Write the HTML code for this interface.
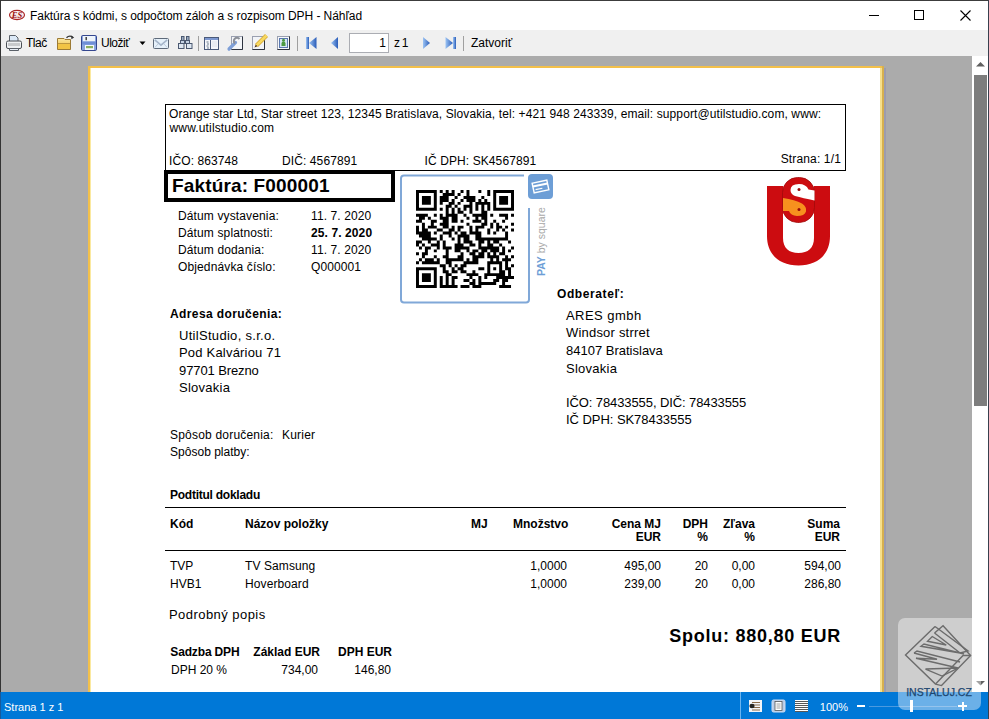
<!DOCTYPE html>
<html><head><meta charset="utf-8">
<style>
*{margin:0;padding:0;box-sizing:border-box}
html,body{width:989px;height:719px;overflow:hidden;background:#fff;font-family:"Liberation Sans",sans-serif;color:#000;position:relative}
.a{position:absolute;white-space:nowrap}
svg{position:absolute;overflow:visible}
</style></head><body>
<div class="a" style="left:0px;top:0px;width:989px;height:30px;background:#fff"></div>
<div class="a" style="left:0px;top:30px;width:989px;height:26px;background:#f0f0f0"></div>
<div class="a" style="left:0px;top:56px;width:972px;height:636px;background:#ababab"></div>
<div class="a" style="left:972px;top:56px;width:16px;height:636px;background:#fff"></div>
<div class="a" style="left:0px;top:692px;width:989px;height:27px;background:#0078d7"></div>
<div class="a" style="left:0px;top:0px;width:989px;height:1px;background:#3c3c3c"></div>
<div class="a" style="left:0px;top:0px;width:1px;height:692px;background:#333"></div>
<div class="a" style="left:0px;top:692px;width:1px;height:27px;background:#1a5a9a"></div>
<div class="a" style="left:988px;top:0px;width:1px;height:719px;background:#38404e"></div>
<svg style="left:8px;top:9px" width="18" height="13" viewBox="0 0 18 13"><defs><linearGradient id="eg" x1="0" y1="0" x2="0" y2="1"><stop offset="0" stop-color="#fff"/><stop offset="1" stop-color="#f0d0d0"/></linearGradient></defs><ellipse cx="9" cy="6" rx="7.5" ry="4.6" fill="url(#eg)" stroke="#a82424" stroke-width="1.1"/><text x="9" y="9" text-anchor="middle" font-family="Liberation Serif" font-style="italic" font-weight="bold" font-size="8.5" fill="#9a1010">ES</text></svg>
<div class="a" style="top:10px;font-size:12px;line-height:12px;left:30px;letter-spacing:-0.06px;">Faktúra s kódmi, s odpočtom záloh a s rozpisom DPH - Náhľad</div>
<div class="a" style="left:869px;top:15px;width:10px;height:1px;background:#000"></div>
<div class="a" style="left:914px;top:10px;width:10px;height:10px;border:1px solid #000"></div>
<svg style="left:960px;top:10px" width="11" height="11"><path d="M0.5 0.5L10.5 10.5M10.5 0.5L0.5 10.5" stroke="#000" stroke-width="1.1"/></svg>
<svg style="left:5px;top:34px" width="18" height="18" viewBox="0 0 18 18">
<path d="M4.5 1.5h6l2.5 2.5v4h-8.5z" fill="#dce9f7" stroke="#5a6068"/>
<rect x="1.5" y="7" width="15" height="7.5" rx="1.5" fill="#eef0f2" stroke="#4a4f55"/>
<rect x="3" y="9" width="12" height="3" fill="#c8cacc"/>
<path d="M4.5 14.5h9v2h-9z" fill="#e8eef6" stroke="#5a6068"/>
</svg>
<div class="a" style="top:37px;font-size:12px;line-height:12px;left:26px;letter-spacing:-0.5px;">Tlač</div>
<svg style="left:56px;top:35px" width="19" height="16" viewBox="0 0 19 16">
<defs><linearGradient id="fg" x1="0" y1="0" x2="0" y2="1"><stop offset="0" stop-color="#fbe9a6"/><stop offset="1" stop-color="#eeb82e"/></linearGradient></defs>
<path d="M1.5 3.5H8L9 4.5H14.5V14.5H1.5Z" fill="url(#fg)" stroke="#9c7a34"/>
<path d="M2 8.5H14V14H2Z" fill="#f2c445"/>
<path d="M2 8.5H14" stroke="#b8923e" stroke-width="0.9"/>
<path d="M10.5 2.8Q13 0.2 16.5 1.8" fill="none" stroke="#333" stroke-width="1.3"/>
<path d="M15.2 0.6L18.2 2.6L15.4 4.2Z" fill="#333"/>
</svg>
<svg style="left:80px;top:34px" width="18" height="18" viewBox="0 0 18 18">
<rect x="1.5" y="1.5" width="15" height="15" rx="1.2" fill="#8aa6e0" stroke="#34468e"/>
<rect x="3" y="2" width="12" height="5.5" fill="#eef4fb"/>
<rect x="5.5" y="3" width="1.4" height="3.2" fill="#333"/>
<rect x="2" y="7.5" width="14" height="3" fill="#6f8fd6"/>
<rect x="5" y="11" width="9" height="5" fill="#f4f8fc"/>
<rect x="6" y="12" width="7" height="2.2" fill="#8cb060"/>
</svg>
<div class="a" style="top:37px;font-size:12px;line-height:12px;left:101px;letter-spacing:-0.5px;">Uložiť</div>
<svg style="left:139px;top:41px" width="8" height="5"><path d="M0.5 0.5h6l-3 3.5z" fill="#000"/></svg>
<svg style="left:152px;top:37px" width="18" height="13" viewBox="0 0 18 13">
<rect x="1.5" y="1.5" width="15" height="10" rx="1" fill="#e6f1fa" stroke="#5e6a7a"/>
<path d="M2.8 2.8L9 8.2L15.2 2.8" fill="none" stroke="#a6b6ca" stroke-width="1.6"/>
<path d="M2.8 10.5L6 7M15.2 10.5L12 7" fill="none" stroke="#c0ccdc" stroke-width="1"/>
</svg>
<svg style="left:177px;top:35px" width="17" height="15" viewBox="177 35 17 15">
<g stroke="#4a5870" stroke-width="1">
<rect x="181.5" y="36.5" width="2.5" height="4" fill="#9aaac0"/>
<rect x="186.5" y="36.5" width="2.5" height="4" fill="#9aaac0"/>
<rect x="180.5" y="40.5" width="4" height="3" fill="#c4d2e4"/>
<rect x="185.5" y="40.5" width="4" height="3" fill="#c4d2e4"/>
<rect x="178.5" y="43.5" width="5.5" height="5" fill="#dde7f2"/>
<rect x="186.5" y="43.5" width="5.5" height="5" fill="#dde7f2"/>
</g>
<rect x="184.5" y="41" width="1" height="2.5" fill="#4a5870"/>
</svg>
<svg style="left:203px;top:36px" width="17" height="15" viewBox="0 0 17 15">
<rect x="1.5" y="1.5" width="14" height="12" fill="#f4f6fa" stroke="#4a5a7a"/>
<rect x="2" y="2" width="13" height="2" fill="#7d98d0"/>
<path d="M7.5 4v9.5" stroke="#4a5a7a"/>
<path d="M3.5 6h2M4 8h2M3.5 10h2M4 12h2" stroke="#6a7a8a"/>
<path d="M9 6h5M9 8h5M9 10h5" stroke="#dde2ea"/>
</svg>
<svg style="left:227px;top:35px" width="17" height="16" viewBox="0 0 17 16">
<rect x="4.5" y="1.5" width="11" height="13" fill="#f4f6f9" stroke="#9aa0b0"/>
<path d="M4.5 14.5H15.5V1.5" fill="none" stroke="#2e3440"/>
<path d="M2 14L8.5 7.5" stroke="#7e9fd8" stroke-width="3.2" stroke-linecap="round"/>
<path d="M8 8.5A3.2 3.2 0 1 1 12.5 4" fill="none" stroke="#8c9098" stroke-width="2"/>
</svg>
<svg style="left:251px;top:34px" width="18" height="17" viewBox="0 0 18 17">
<rect x="1.5" y="2.5" width="12" height="13" fill="#f2f4f8" stroke="#9aa0b0"/>
<path d="M1.5 15.5H13.5V6" fill="none" stroke="#2e3440"/>
<path d="M5.5 11.5L15.5 1.5" stroke="#d8a830" stroke-width="4.2"/>
<path d="M5.5 11.5L15.5 1.5" stroke="#f6d860" stroke-width="2.6"/>
<path d="M3.5 13.5l1.2-3 1.8 1.8z" fill="#5a3a18"/>
</svg>
<svg style="left:276px;top:35px" width="15" height="16" viewBox="0 0 15 16">
<rect x="1.5" y="1.5" width="12" height="13" fill="#f6f8fb" stroke="#9aa0b0"/>
<path d="M1.5 14.5H13.5V1.5" fill="none" stroke="#2e3440"/>
<rect x="3.5" y="3.5" width="8" height="9" fill="#d6e6f6" stroke="#5a78b0"/>
<path d="M5.5 11V8.5Q5.5 6.5 7.5 6.5Q9.5 6.5 9.5 8.5V11Z" fill="#4c9a44"/>
<circle cx="7.5" cy="5.3" r="1.5" fill="#4c9a44"/>
</svg>
<svg style="left:305px;top:36px" width="13" height="14" viewBox="0 0 13 14">
<defs><linearGradient id="ng" x1="0" y1="0" x2="1" y2="0"><stop offset="0" stop-color="#9cc4f4"/><stop offset="1" stop-color="#2a5cb8"/></linearGradient></defs><rect x="1" y="1" width="3" height="12" fill="url(#ng)"/>
<path d="M11.5 1v12L4 7z" fill="url(#ng)"/>
</svg>
<svg style="left:329px;top:36px" width="11" height="14" viewBox="0 0 11 14"><path d="M9 1v12L2 7z" fill="url(#ng)"/></svg>
<div class="a" style="left:349px;top:33px;width:40px;height:20px;background:#fff;border:1px solid #abadb3"></div>
<div class="a" style="top:37px;font-size:12px;line-height:12px;right:603px;text-align:right;">1</div>
<div class="a" style="top:37px;font-size:12px;line-height:12px;left:394px;letter-spacing:-0.8px;">z 1</div>
<svg style="left:421px;top:36px" width="11" height="14" viewBox="0 0 11 14"><path d="M2 1v12L9 7z" fill="url(#ng)"/></svg>
<svg style="left:444px;top:36px" width="13" height="14" viewBox="0 0 13 14">
<rect x="9" y="1" width="3" height="12" fill="url(#ng)"/>
<path d="M1.5 1v12L9 7z" fill="url(#ng)"/>
</svg>
<div class="a" style="top:37px;font-size:12px;line-height:12px;left:471px;">Zatvoriť</div>
<div class="a" style="left:198px;top:36px;width:1px;height:15px;background:#a0a0a0"></div>
<div class="a" style="left:297px;top:36px;width:1px;height:15px;background:#a0a0a0"></div>
<div class="a" style="left:463px;top:36px;width:1px;height:15px;background:#a0a0a0"></div>
<div class="a" style="left:88px;top:66px;width:796px;height:626px;background:#fff;border:2px solid #f3c04a;border-bottom:none;border-right:none"></div>
<div class="a" style="left:880px;top:68px;width:2px;height:624px;background:#f6e08c"></div>
<div class="a" style="left:882px;top:66px;width:2px;height:626px;background:#d6b04e"></div>
<div class="a" style="left:884px;top:68px;width:2px;height:624px;background:#9c9cae"></div>
<div class="a" style="left:90px;top:68px;width:1px;height:624px;background:#fbe9a0"></div>
<div class="a" style="left:165px;top:104px;width:681px;height:67px;border:1px solid #000"></div>
<div class="a" style="top:108px;font-size:12px;line-height:12px;left:169px;letter-spacing:0.1px;">Orange star Ltd, Star street 123, 12345 Bratislava, Slovakia, tel: +421 948 243339, email: support@utilstudio.com, www:</div>
<div class="a" style="top:122px;font-size:12px;line-height:12px;left:169.5px;letter-spacing:0.15px;">www.utilstudio.com</div>
<div class="a" style="top:155px;font-size:12px;line-height:12px;left:169px;letter-spacing:0.1px;">IČO: 863748</div>
<div class="a" style="top:155px;font-size:12px;line-height:12px;left:282px;letter-spacing:0.1px;">DIČ: 4567891</div>
<div class="a" style="top:155px;font-size:12px;line-height:12px;left:424.5px;letter-spacing:0.1px;">IČ DPH: SK4567891</div>
<div class="a" style="top:153px;font-size:12px;line-height:12px;right:148px;text-align:right;letter-spacing:0.15px;">Strana: 1/1</div>
<div class="a" style="left:164px;top:170px;width:231px;height:32px;border:4px solid #000"></div>
<div class="a" style="top:176px;font-size:19px;line-height:19px;font-weight:bold;left:172px;letter-spacing:0.15px;">Faktúra: F000001</div>
<div class="a" style="top:210px;font-size:12px;line-height:12px;left:178px;letter-spacing:0.13px;">Dátum vystavenia:</div>
<div class="a" style="top:210px;font-size:12px;line-height:12px;left:311px;letter-spacing:0.1px;">11. 7. 2020</div>
<div class="a" style="top:227px;font-size:12px;line-height:12px;left:178px;letter-spacing:0.13px;">Dátum splatnosti:</div>
<div class="a" style="top:227px;font-size:12px;line-height:12px;font-weight:bold;left:311px;letter-spacing:0.1px;">25. 7. 2020</div>
<div class="a" style="top:244px;font-size:12px;line-height:12px;left:178px;letter-spacing:0.13px;">Dátum dodania:</div>
<div class="a" style="top:244px;font-size:12px;line-height:12px;left:311px;letter-spacing:0.1px;">11. 7. 2020</div>
<div class="a" style="top:261px;font-size:12px;line-height:12px;left:178px;letter-spacing:0.13px;">Objednávka číslo:</div>
<div class="a" style="top:261px;font-size:12px;line-height:12px;left:311px;letter-spacing:0.1px;">Q000001</div>
<svg style="left:399px;top:173px" width="160" height="132" viewBox="399 173 160 132">
<path d="M524 175.5H404a3 3 0 0 0 -3 3V299.5a3 3 0 0 0 3 3H526a3 3 0 0 0 3 -3V208" fill="none" stroke="#80a8d8" stroke-width="2"/>
<rect x="528" y="174" width="25" height="25" rx="4" fill="#6d9ed6"/>
<g transform="rotate(-12 540.5 186.5)"><rect x="533" y="181.5" width="15" height="10" fill="none" stroke="#fff" stroke-width="1.4"/><rect x="533" y="184" width="15" height="2" fill="#fff"/><rect x="535" y="188" width="7" height="1.2" fill="#fff"/></g>
<text transform="translate(545 276) rotate(-90)" font-family="Liberation Sans" font-size="10.5" fill="#a8a8a8"><tspan fill="#6d9ed6" font-weight="bold">PAY</tspan> by square</text>
</svg>
<svg style="left:416px;top:190px" width="98" height="98" viewBox="0 0 33 33"><path d="M0 0h7v1h-7zM8 0h1v1h-1zM10 0h1v1h-1zM12 0h1v1h-1zM15 0h1v1h-1zM17 0h1v1h-1zM21 0h1v1h-1zM24 0h1v1h-1zM26 0h7v1h-7zM0 1h1v1h-1zM6 1h1v1h-1zM9 1h4v1h-4zM14 1h1v1h-1zM17 1h1v1h-1zM24 1h1v1h-1zM26 1h1v1h-1zM32 1h1v1h-1zM0 2h1v1h-1zM2 2h3v1h-3zM6 2h1v1h-1zM8 2h3v1h-3zM13 2h1v1h-1zM16 2h4v1h-4zM22 2h1v1h-1zM26 2h1v1h-1zM28 2h3v1h-3zM32 2h1v1h-1zM0 3h1v1h-1zM2 3h3v1h-3zM6 3h1v1h-1zM8 3h3v1h-3zM12 3h1v1h-1zM15 3h1v1h-1zM17 3h3v1h-3zM21 3h1v1h-1zM23 3h1v1h-1zM26 3h1v1h-1zM28 3h3v1h-3zM32 3h1v1h-1zM0 4h1v1h-1zM2 4h3v1h-3zM6 4h1v1h-1zM8 4h1v1h-1zM11 4h2v1h-2zM14 4h1v1h-1zM18 4h1v1h-1zM20 4h5v1h-5zM26 4h1v1h-1zM28 4h3v1h-3zM32 4h1v1h-1zM0 5h1v1h-1zM6 5h1v1h-1zM10 5h2v1h-2zM13 5h1v1h-1zM16 5h3v1h-3zM20 5h1v1h-1zM22 5h1v1h-1zM24 5h1v1h-1zM26 5h1v1h-1zM32 5h1v1h-1zM0 6h7v1h-7zM8 6h1v1h-1zM10 6h1v1h-1zM12 6h1v1h-1zM14 6h1v1h-1zM16 6h1v1h-1zM18 6h1v1h-1zM20 6h1v1h-1zM22 6h1v1h-1zM24 6h1v1h-1zM26 6h7v1h-7zM10 7h1v1h-1zM12 7h1v1h-1zM14 7h2v1h-2zM18 7h1v1h-1zM22 7h2v1h-2zM0 8h4v1h-4zM6 8h1v1h-1zM8 8h1v1h-1zM10 8h4v1h-4zM16 8h1v1h-1zM19 8h5v1h-5zM25 8h1v1h-1zM28 8h3v1h-3zM32 8h1v1h-1zM1 9h2v1h-2zM4 9h1v1h-1zM8 9h3v1h-3zM12 9h2v1h-2zM17 9h1v1h-1zM20 9h1v1h-1zM22 9h2v1h-2zM30 9h1v1h-1zM0 10h2v1h-2zM5 10h2v1h-2zM9 10h2v1h-2zM12 10h2v1h-2zM15 10h1v1h-1zM19 10h3v1h-3zM23 10h1v1h-1zM26 10h1v1h-1zM29 10h1v1h-1zM2 11h1v1h-1zM5 11h1v1h-1zM8 11h3v1h-3zM17 11h1v1h-1zM22 11h2v1h-2zM25 11h1v1h-1zM27 11h1v1h-1zM32 11h1v1h-1zM0 12h1v1h-1zM2 12h1v1h-1zM4 12h3v1h-3zM9 12h2v1h-2zM12 12h1v1h-1zM14 12h2v1h-2zM18 12h1v1h-1zM20 12h3v1h-3zM25 12h1v1h-1zM27 12h2v1h-2zM30 12h1v1h-1zM0 13h1v1h-1zM2 13h2v1h-2zM7 13h2v1h-2zM11 13h2v1h-2zM14 13h1v1h-1zM18 13h1v1h-1zM20 13h1v1h-1zM24 13h1v1h-1zM27 13h1v1h-1zM29 13h1v1h-1zM32 13h1v1h-1zM0 14h5v1h-5zM6 14h1v1h-1zM9 14h3v1h-3zM13 14h1v1h-1zM15 14h2v1h-2zM18 14h4v1h-4zM24 14h1v1h-1zM26 14h1v1h-1zM30 14h1v1h-1zM1 15h4v1h-4zM8 15h1v1h-1zM11 15h1v1h-1zM14 15h4v1h-4zM20 15h2v1h-2zM30 15h1v1h-1zM2 16h5v1h-5zM8 16h1v1h-1zM12 16h1v1h-1zM14 16h1v1h-1zM16 16h2v1h-2zM20 16h11v1h-11zM0 17h2v1h-2zM4 17h1v1h-1zM7 17h1v1h-1zM9 17h1v1h-1zM14 17h1v1h-1zM16 17h3v1h-3zM21 17h2v1h-2zM24 17h1v1h-1zM26 17h2v1h-2zM31 17h1v1h-1zM0 18h1v1h-1zM2 18h1v1h-1zM5 18h3v1h-3zM9 18h1v1h-1zM13 18h3v1h-3zM18 18h2v1h-2zM21 18h1v1h-1zM24 18h2v1h-2zM28 18h1v1h-1zM1 19h1v1h-1zM3 19h2v1h-2zM7 19h1v1h-1zM9 19h3v1h-3zM13 19h5v1h-5zM21 19h7v1h-7zM29 19h1v1h-1zM32 19h1v1h-1zM3 20h1v1h-1zM6 20h1v1h-1zM10 20h1v1h-1zM13 20h2v1h-2zM17 20h1v1h-1zM19 20h2v1h-2zM22 20h2v1h-2zM25 20h3v1h-3zM29 20h1v1h-1zM31 20h1v1h-1zM0 21h1v1h-1zM2 21h2v1h-2zM10 21h1v1h-1zM15 21h1v1h-1zM18 21h2v1h-2zM21 21h2v1h-2zM24 21h1v1h-1zM26 21h1v1h-1zM28 21h2v1h-2zM2 22h1v1h-1zM6 22h1v1h-1zM9 22h2v1h-2zM14 22h2v1h-2zM19 22h4v1h-4zM24 22h4v1h-4zM30 22h1v1h-1zM32 22h1v1h-1zM1 23h1v1h-1zM3 23h3v1h-3zM7 23h1v1h-1zM10 23h6v1h-6zM17 23h1v1h-1zM19 23h2v1h-2zM25 23h1v1h-1zM27 23h1v1h-1zM29 23h3v1h-3zM0 24h1v1h-1zM2 24h6v1h-6zM10 24h2v1h-2zM16 24h5v1h-5zM24 24h5v1h-5zM30 24h1v1h-1zM8 25h2v1h-2zM11 25h1v1h-1zM13 25h1v1h-1zM15 25h2v1h-2zM24 25h1v1h-1zM28 25h1v1h-1zM30 25h1v1h-1zM32 25h1v1h-1zM0 26h7v1h-7zM9 26h1v1h-1zM12 26h1v1h-1zM14 26h2v1h-2zM21 26h2v1h-2zM24 26h1v1h-1zM26 26h1v1h-1zM28 26h1v1h-1zM30 26h2v1h-2zM0 27h1v1h-1zM6 27h1v1h-1zM9 27h2v1h-2zM12 27h2v1h-2zM15 27h2v1h-2zM19 27h1v1h-1zM24 27h1v1h-1zM28 27h2v1h-2zM31 27h1v1h-1zM0 28h1v1h-1zM2 28h3v1h-3zM6 28h1v1h-1zM10 28h2v1h-2zM17 28h4v1h-4zM23 28h7v1h-7zM31 28h1v1h-1zM0 29h1v1h-1zM2 29h3v1h-3zM6 29h1v1h-1zM8 29h1v1h-1zM10 29h1v1h-1zM12 29h2v1h-2zM18 29h1v1h-1zM21 29h1v1h-1zM23 29h1v1h-1zM27 29h6v1h-6zM0 30h1v1h-1zM2 30h3v1h-3zM6 30h1v1h-1zM8 30h1v1h-1zM10 30h1v1h-1zM12 30h1v1h-1zM16 30h2v1h-2zM19 30h1v1h-1zM21 30h1v1h-1zM26 30h2v1h-2zM29 30h2v1h-2zM0 31h1v1h-1zM6 31h1v1h-1zM8 31h1v1h-1zM10 31h1v1h-1zM12 31h1v1h-1zM18 31h2v1h-2zM21 31h6v1h-6zM29 31h1v1h-1zM0 32h7v1h-7zM8 32h6v1h-6zM15 32h3v1h-3zM19 32h3v1h-3zM28 32h4v1h-4z" fill="#000"/></svg>
<svg style="left:760px;top:172px" width="80" height="100" viewBox="760 172 80 100">
<path d="M767 186V236C767 255 780 265.5 798.5 265.5C817 265.5 830 255 830 236V186H814V238C814 248 808 253 798.5 253C789 253 783 248 783 238V186Z" fill="#cc0c10"/>
<rect x="782.5" y="177.5" width="32" height="45" rx="15" fill="#cc0c10" stroke="#a00a0a" stroke-width="0.8"/>
<path d="M790.5 190Q790.5 184 799 184Q806 184 808.5 189.5L814.5 190.5V200.5Q803 198 795 196Q790.5 194 790.5 190Z" fill="#fff"/>
<circle cx="799" cy="189.5" r="1.5" fill="#9a0a0a"/>
<path d="M783 198Q795 199.5 802 203.5Q807 207 806 211.5Q804.5 216 797 216Q790.5 215.5 789 211L783 211Z" fill="#f7901e"/>
<circle cx="799" cy="209.5" r="1.5" fill="#9a0a0a"/>
</svg>
<div class="a" style="top:308px;font-size:12px;line-height:12px;font-weight:bold;left:170px;letter-spacing:0.4px;">Adresa doručenia:</div>
<div class="a" style="top:329px;font-size:13px;line-height:13px;left:179px;letter-spacing:0.3px;">UtilStudio, s.r.o.</div>
<div class="a" style="top:346px;font-size:13px;line-height:13px;left:179px;letter-spacing:0.2px;">Pod Kalváriou 71</div>
<div class="a" style="top:364px;font-size:13px;line-height:13px;left:179px;letter-spacing:-0.1px;">97701 Brezno</div>
<div class="a" style="top:381px;font-size:13px;line-height:13px;left:179px;letter-spacing:0.25px;">Slovakia</div>
<div class="a" style="top:429px;font-size:12px;line-height:12px;left:170px;letter-spacing:0.2px;">Spôsob doručenia:</div>
<div class="a" style="top:429px;font-size:12px;line-height:12px;left:282px;letter-spacing:0.2px;">Kurier</div>
<div class="a" style="top:446px;font-size:12px;line-height:12px;left:170px;letter-spacing:0.02px;">Spôsob platby:</div>
<div class="a" style="top:288px;font-size:12px;line-height:12px;font-weight:bold;left:557px;letter-spacing:0.6px;">Odberateľ:</div>
<div class="a" style="top:309px;font-size:13px;line-height:13px;left:566px;letter-spacing:0.45px;">ARES gmbh</div>
<div class="a" style="top:326px;font-size:13px;line-height:13px;left:566px;letter-spacing:0.2px;">Windsor strret</div>
<div class="a" style="top:344px;font-size:13px;line-height:13px;left:566px;letter-spacing:0.0px;">84107 Bratislava</div>
<div class="a" style="top:362px;font-size:13px;line-height:13px;left:566px;letter-spacing:0.25px;">Slovakia</div>
<div class="a" style="top:396px;font-size:13px;line-height:13px;left:566px;letter-spacing:-0.1px;">IČO: 78433555, DIČ: 78433555</div>
<div class="a" style="top:413px;font-size:13px;line-height:13px;left:566px;letter-spacing:-0.05px;">IČ DPH: SK78433555</div>
<div class="a" style="top:489px;font-size:12px;line-height:12px;font-weight:bold;left:170px;letter-spacing:-0.25px;">Podtitul dokladu</div>
<div class="a" style="left:165px;top:507px;width:681px;height:1px;background:#000"></div>
<div class="a" style="top:518px;font-size:12px;line-height:12px;font-weight:bold;left:170px;">Kód</div>
<div class="a" style="top:518px;font-size:12px;line-height:12px;font-weight:bold;left:245px;">Názov položky</div>
<div class="a" style="top:518px;font-size:12px;line-height:12px;font-weight:bold;left:471px;">MJ</div>
<div class="a" style="top:518px;font-size:12px;line-height:12px;font-weight:bold;left:513px;">Množstvo</div>
<div class="a" style="top:518px;font-size:12px;line-height:12px;font-weight:bold;right:328px;text-align:right;">Cena MJ</div>
<div class="a" style="top:531px;font-size:12px;line-height:12px;font-weight:bold;right:328px;text-align:right;">EUR</div>
<div class="a" style="top:518px;font-size:12px;line-height:12px;font-weight:bold;right:281px;text-align:right;">DPH</div>
<div class="a" style="top:531px;font-size:12px;line-height:12px;font-weight:bold;right:281px;text-align:right;">%</div>
<div class="a" style="top:518px;font-size:12px;line-height:12px;font-weight:bold;right:234px;text-align:right;">Zľava</div>
<div class="a" style="top:531px;font-size:12px;line-height:12px;font-weight:bold;right:234px;text-align:right;">%</div>
<div class="a" style="top:518px;font-size:12px;line-height:12px;font-weight:bold;right:149px;text-align:right;">Suma</div>
<div class="a" style="top:531px;font-size:12px;line-height:12px;font-weight:bold;right:149px;text-align:right;">EUR</div>
<div class="a" style="left:165px;top:550px;width:681px;height:1px;background:#000"></div>
<div class="a" style="top:560px;font-size:12px;line-height:12px;left:170px;">TVP</div>
<div class="a" style="top:560px;font-size:12px;line-height:12px;left:245px;letter-spacing:0.1px;">TV Samsung</div>
<div class="a" style="top:560px;font-size:12px;line-height:12px;right:422px;text-align:right;">1,0000</div>
<div class="a" style="top:560px;font-size:12px;line-height:12px;right:328px;text-align:right;">495,00</div>
<div class="a" style="top:560px;font-size:12px;line-height:12px;right:281px;text-align:right;">20</div>
<div class="a" style="top:560px;font-size:12px;line-height:12px;right:234px;text-align:right;">0,00</div>
<div class="a" style="top:560px;font-size:12px;line-height:12px;right:148px;text-align:right;">594,00</div>
<div class="a" style="top:578px;font-size:12px;line-height:12px;left:170px;">HVB1</div>
<div class="a" style="top:578px;font-size:12px;line-height:12px;left:245px;letter-spacing:0.1px;">Hoverboard</div>
<div class="a" style="top:578px;font-size:12px;line-height:12px;right:422px;text-align:right;">1,0000</div>
<div class="a" style="top:578px;font-size:12px;line-height:12px;right:328px;text-align:right;">239,00</div>
<div class="a" style="top:578px;font-size:12px;line-height:12px;right:281px;text-align:right;">20</div>
<div class="a" style="top:578px;font-size:12px;line-height:12px;right:234px;text-align:right;">0,00</div>
<div class="a" style="top:578px;font-size:12px;line-height:12px;right:148px;text-align:right;">286,80</div>
<div class="a" style="top:608px;font-size:13px;line-height:13px;left:169px;letter-spacing:0.45px;">Podrobný popis</div>
<div class="a" style="top:627px;font-size:18px;line-height:18px;font-weight:bold;right:148px;text-align:right;letter-spacing:0.75px;">Spolu: 880,80 EUR</div>
<div class="a" style="top:646px;font-size:12px;line-height:12px;font-weight:bold;left:170.3px;letter-spacing:-0.15px;">Sadzba DPH</div>
<div class="a" style="top:646px;font-size:12px;line-height:12px;font-weight:bold;right:669px;text-align:right;">Základ EUR</div>
<div class="a" style="top:646px;font-size:12px;line-height:12px;font-weight:bold;right:597px;text-align:right;">DPH EUR</div>
<div class="a" style="top:664px;font-size:12px;line-height:12px;left:171px;">DPH 20 %</div>
<div class="a" style="top:664px;font-size:12px;line-height:12px;right:671px;text-align:right;">734,00</div>
<div class="a" style="top:664px;font-size:12px;line-height:12px;right:598px;text-align:right;">146,80</div>
<svg style="left:972px;top:56px" width="16" height="636"><path d="M4 10.5L8.5 6 13 10.5z" fill="#606060"/><path d="M4 625L8.5 629.5 13 625z" fill="#606060"/></svg>
<div class="a" style="left:974px;top:75px;width:13px;height:331px;background:#7d7d7d"></div>
<div class="a" style="top:702px;font-size:11px;line-height:11px;color:#fff;left:4px;">Strana 1 z 1</div>
<div class="a" style="left:740px;top:692px;width:1px;height:27px;background:#6ab4f0"></div>
<svg style="left:748px;top:699px" width="64" height="14" viewBox="0 0 64 14">
<rect x="1" y="1" width="13" height="12" fill="#f2f4f8"/><path d="M4 3.5h8M4 6h8M4 8.5h8M4 11h8" stroke="#8a6a4a" stroke-width="1.1"/><ellipse cx="4" cy="7" rx="2.6" ry="2.2" fill="#222"/>
<rect x="24" y="1" width="13" height="12" rx="1.5" fill="#b8cce8" stroke="#d0dcf0"/><rect x="27" y="2.5" width="7" height="9" fill="#fff" stroke="#555" stroke-width="0.8"/><path d="M28.5 5h4M28.5 7h4M28.5 9h4" stroke="#888" stroke-width="0.8"/>
<rect x="47" y="1" width="13" height="12" fill="#fff"/><path d="M47 2.5h13M47 4.5h13M47 6.5h13M47 8.5h13M47 10.5h13M47 12.5h13" stroke="#444" stroke-width="0.9"/>
</svg>
<div class="a" style="top:702px;font-size:11px;line-height:11px;color:#fff;right:141px;text-align:right;">100%</div>
<div class="a" style="left:857px;top:705px;width:8px;height:2px;background:#fff"></div>
<div class="a" style="left:869px;top:706px;width:88px;height:1px;background:#4a9ae0"></div>
<div class="a" style="left:910px;top:700px;width:3px;height:12px;background:#fff"></div>
<div class="a" style="left:958px;top:705px;width:9px;height:2px;background:#fff"></div>
<div class="a" style="left:961.5px;top:702px;width:2px;height:9px;background:#fff"></div>
<svg style="left:897px;top:617px" width="86" height="95" viewBox="897 617 86 95">
<rect x="898" y="618" width="83" height="92" rx="7" fill="#fff" fill-opacity="0.42"/>
<g transform="translate(900 620) scale(0.1001)" fill="none" stroke="#6c6c6c" stroke-width="14" stroke-linejoin="miter">
<path d="M350 65L55 350L355 640L415 655L705 355L430 58L345 130"/>
<path d="M350 65L680 310L600 330"/>
<path d="M355 640L630 355L705 355"/>
<path d="M345 130L600 330L210 262L240 240L640 340"/>
<path d="M322 165L462 250L275 212Z"/>
<path d="M140 330L370 392L160 382L580 480L255 490L420 560L580 480"/>
<path d="M140 330L170 310L600 420"/>
</g>
<text x="939" y="695.5" text-anchor="middle" font-family="Liberation Sans" font-size="10.5" fill="#1d4670" stroke="#1d4670" stroke-width="0.25">INSTALUJ.CZ</text>
</svg>
</body></html>
